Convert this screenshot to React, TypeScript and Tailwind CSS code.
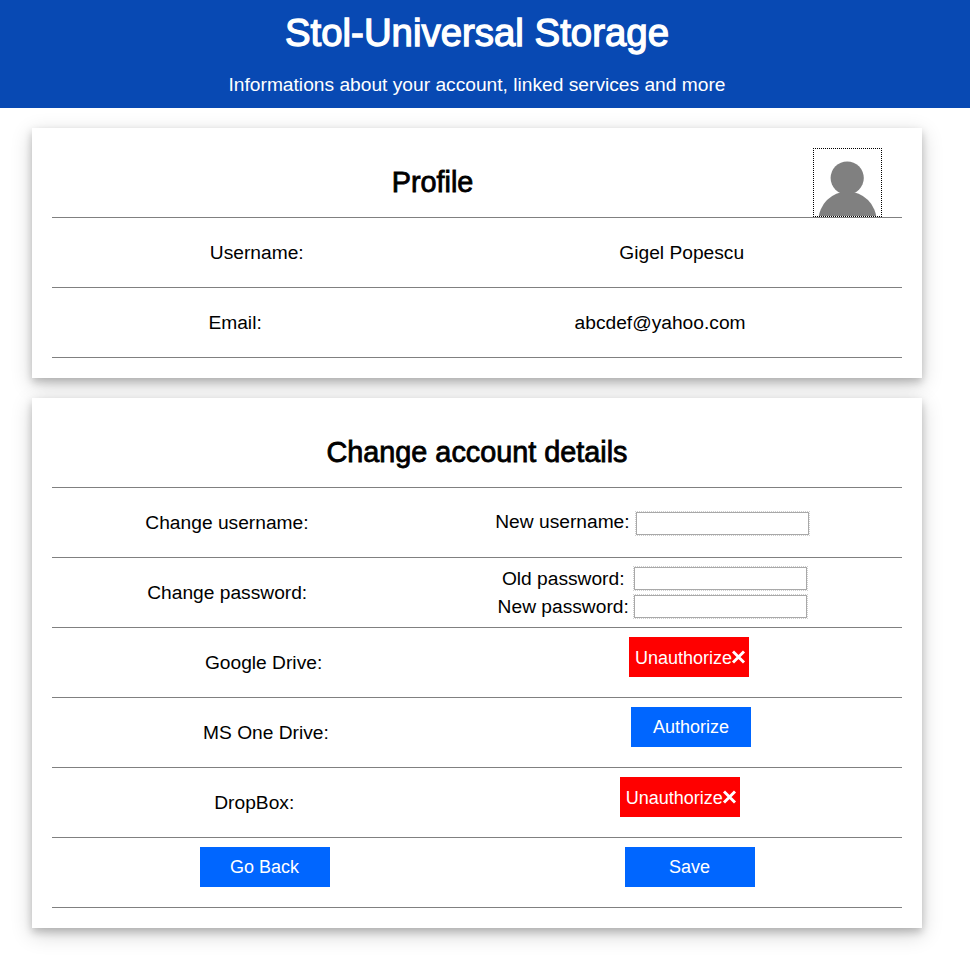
import type { ReactNode } from "react";

function Row({ children }: { children: ReactNode }) {
  return (
    <div className="flex h-[70px] items-center justify-around border-b border-[#808080]">
      {children}
    </div>
  );
}

function Card({ children }: { children: ReactNode }) {
  return (
    <section className="w-[890px] bg-white p-5 shadow-[0_4px_8px_0_rgba(0,0,0,0.2),0_6px_20px_0_rgba(0,0,0,0.19)]">
      {children}
    </section>
  );
}

function Heading({ children }: { children: ReactNode }) {
  return (
    <h2 className="flex-1 text-center text-[28.8px] leading-[33px] [-webkit-text-stroke:0.8px_currentColor]">
      {children}
    </h2>
  );
}

function Field({ type }: { type: string }) {
  return (
    <input
      type={type}
      className="block h-[23px] w-[173px] border border-[#a9a9a9] bg-white px-1 outline-1 outline-dotted outline-[#cfcfcf]"
    />
  );
}

function Cross() {
  return (
    <svg viewBox="0 0 14 14" className="-ml-px mb-[2px] h-[14px] w-[15px]" fill="none" stroke="currentColor" strokeWidth="2.9">
      <path d="M1.5 1.5 12.5 12.5M12.5 1.5 1.5 12.5" />
    </svg>
  );
}

function Button({ kind, children }: { kind: "link" | "unlink" | "wide"; children: ReactNode }) {
  const look = {
    link: "w-[120px] bg-[#0066ff]",
    unlink: "ml-px w-[120px] bg-[#ff0000] pl-[3px] pt-[2px]",
    wide: "w-[130px] bg-[#0066ff]",
  }[kind];
  return (
    <button className={`mb-[11px] flex h-10 items-center justify-center text-[18px] text-white ${look}`}>
      {children}
    </button>
  );
}

function Avatar() {
  return (
    <div className="mr-5 h-[69px] w-[69px] border border-dotted border-black">
      <svg viewBox="0 0 67 67" className="h-full w-full" fill="#808080">
        <circle cx="33.2" cy="29" r="16.6" />
        <circle cx="33.5" cy="71.5" r="29" />
      </svg>
    </div>
  );
}

export default function App() {
  return (
    <div className="h-[956px] overflow-hidden bg-white font-['Liberation_Sans',Arial,sans-serif] text-[19.2px] leading-[22px] text-black">
      <header className="flex h-[108px] flex-col items-center bg-[#0849b3] pr-4 pt-[11px] text-white">
        <h1 className="text-[38.4px] leading-[44px] [-webkit-text-stroke:1.3px_currentColor]">
          Stol-Universal Storage
        </h1>
        <p className="mt-[19px]">Informations about your account, linked services and more</p>
      </header>
      <main className="flex flex-col gap-5 pl-8 pt-5">
        <Card>
          <Row>
            <Heading>Profile</Heading>
            <Avatar />
          </Row>
          <Row>
            <span>Username:</span>
            <span>Gigel Popescu</span>
          </Row>
          <Row>
            <span>Email:</span>
            <span>abcdef@yahoo.com</span>
          </Row>
        </Card>
        <Card>
          <Row>
            <Heading>Change account details</Heading>
          </Row>
          <Row>
            <span>Change username:</span>
            <label className="flex items-start gap-[6px] pt-px">
              <span className="-mt-px">New username:</span>
              <Field type="text" />
            </label>
          </Row>
          <Row>
            <span>Change password:</span>
            <div className="grid grid-cols-[auto_173px] items-center gap-x-[5px] gap-y-[5px] text-center">
              <span>Old password:</span>
              <Field type="password" />
              <span>New password:</span>
              <Field type="password" />
            </div>
          </Row>
          <Row>
            <span>Google Drive:</span>
            <Button kind="unlink">
              Unauthorize
              <Cross />
            </Button>
          </Row>
          <Row>
            <span>MS One Drive:</span>
            <Button kind="link">Authorize</Button>
          </Row>
          <Row>
            <span>DropBox:</span>
            <Button kind="unlink">
              Unauthorize
              <Cross />
            </Button>
          </Row>
          <Row>
            <Button kind="wide">Go Back</Button>
            <Button kind="wide">Save</Button>
          </Row>
        </Card>
      </main>
    </div>
  );
}
